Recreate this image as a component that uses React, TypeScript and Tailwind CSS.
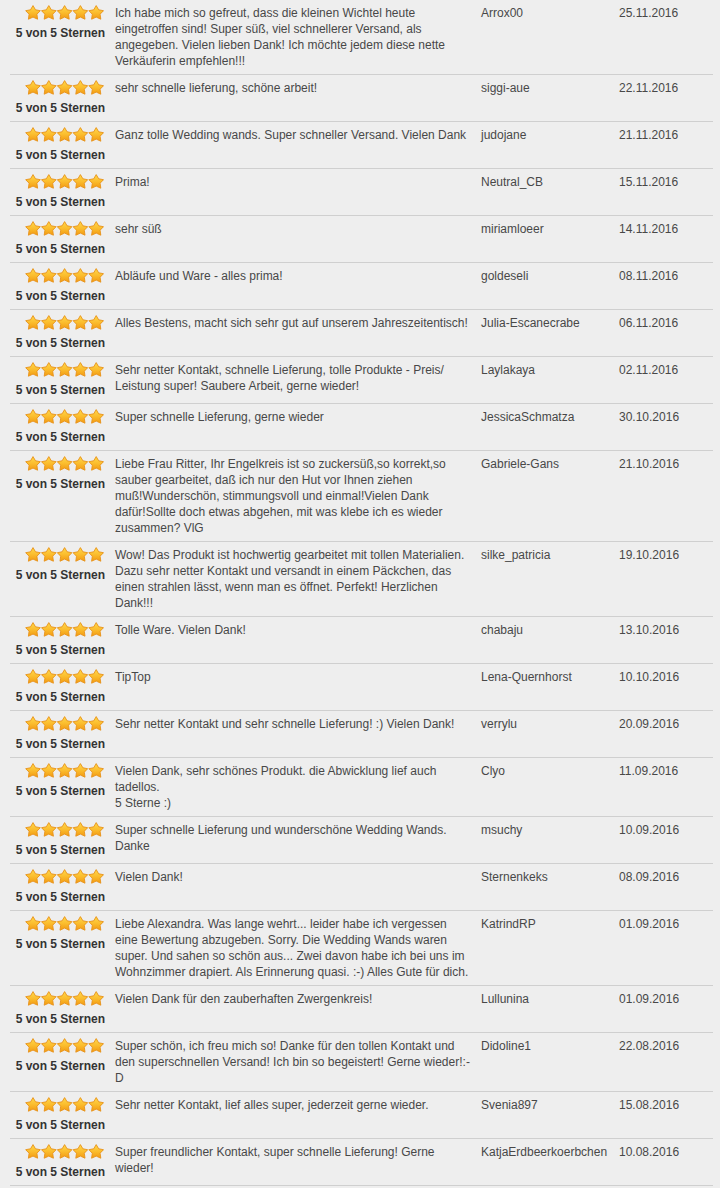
import React from "react";

type Row = { text: React.ReactNode; name: string; date: string };

const rows: Row[] = [
  { text: "Ich habe mich so gefreut, dass die kleinen Wichtel heute eingetroffen sind! Super süß, viel schnellerer Versand, als angegeben. Vielen lieben Dank! Ich möchte jedem diese nette Verkäuferin empfehlen!!!", name: "Arrox00", date: "25.11.2016" },
  { text: "sehr schnelle lieferung, schöne arbeit!", name: "siggi-aue", date: "22.11.2016" },
  { text: "Ganz tolle Wedding wands. Super schneller Versand. Vielen Dank", name: "judojane", date: "21.11.2016" },
  { text: "Prima!", name: "Neutral_CB", date: "15.11.2016" },
  { text: "sehr süß", name: "miriamloeer", date: "14.11.2016" },
  { text: "Abläufe und Ware - alles prima!", name: "goldeseli", date: "08.11.2016" },
  { text: "Alles Bestens, macht sich sehr gut auf unserem Jahreszeitentisch!", name: "Julia-Escanecrabe", date: "06.11.2016" },
  { text: <>Sehr netter Kontakt, schnelle Lieferung, tolle Produkte - Preis/<wbr />Leistung super! Saubere Arbeit, gerne wieder!</>, name: "Laylakaya", date: "02.11.2016" },
  { text: "Super schnelle Lieferung, gerne wieder", name: "JessicaSchmatza", date: "30.10.2016" },
  { text: "Liebe Frau Ritter, Ihr Engelkreis ist so zuckersüß,so korrekt,so sauber gearbeitet, daß ich nur den Hut vor Ihnen ziehen muß!Wunderschön, stimmungsvoll und einmal!Vielen Dank dafür!Sollte doch etwas abgehen, mit was klebe ich es wieder zusammen? VlG", name: "Gabriele-Gans", date: "21.10.2016" },
  { text: "Wow! Das Produkt ist hochwertig gearbeitet mit tollen Materialien. Dazu sehr netter Kontakt und versandt in einem Päckchen, das einen strahlen lässt, wenn man es öffnet. Perfekt! Herzlichen Dank!!!", name: "silke_patricia", date: "19.10.2016" },
  { text: "Tolle Ware. Vielen Dank!", name: "chabaju", date: "13.10.2016" },
  { text: "TipTop", name: "Lena-Quernhorst", date: "10.10.2016" },
  { text: "Sehr netter Kontakt und sehr schnelle Lieferung! :) Vielen Dank!", name: "verrylu", date: "20.09.2016" },
  { text: <>Vielen Dank, sehr schönes Produkt. die Abwicklung lief auch tadellos.<br />5 Sterne :)</>, name: "Clyo", date: "11.09.2016" },
  { text: "Super schnelle Lieferung und wunderschöne Wedding Wands. Danke", name: "msuchy", date: "10.09.2016" },
  { text: "Vielen Dank!", name: "Sternenkeks", date: "08.09.2016" },
  { text: "Liebe Alexandra. Was lange wehrt... leider habe ich vergessen eine Bewertung abzugeben. Sorry. Die Wedding Wands waren super. Und sahen so schön aus... Zwei davon habe ich bei uns im Wohnzimmer drapiert. Als Erinnerung quasi. :-) Alles Gute für dich.", name: "KatrindRP", date: "01.09.2016" },
  { text: "Vielen Dank für den zauberhaften Zwergenkreis!", name: "Lullunina", date: "01.09.2016" },
  { text: "Super schön, ich freu mich so! Danke für den tollen Kontakt und den superschnellen Versand! Ich bin so begeistert! Gerne wieder!:-D", name: "Didoline1", date: "22.08.2016" },
  { text: "Sehr netter Kontakt, lief alles super, jederzeit gerne wieder.", name: "Svenia897", date: "15.08.2016" },
  { text: "Super freundlicher Kontakt, super schnelle Lieferung! Gerne wieder!", name: "KatjaErdbeerkoerbchen", date: "10.08.2016" },
];

const STAR = "M8 0.6 L10.5 4.8 L15.3 5.7 L11.9 9.2 L12.6 14.2 L8 12.1 L3.4 14.2 L4.1 9.2 L0.7 5.7 L5.5 4.8 Z";

function Stars() {
  return (
    <svg width="79" height="15" viewBox="0 0 79 15" className="block">
      <defs>
        <linearGradient id="sg" x1="0" y1="0" x2="0" y2="1">
          <stop offset="0" stopColor="#ffd84a" />
          <stop offset="0.5" stopColor="#fbbd2e" />
          <stop offset="1" stopColor="#f29a12" />
        </linearGradient>
      </defs>
      {[0, 1, 2, 3, 4].map((i) => (
        <path
          key={i}
          d={STAR}
          transform={`translate(${i * 15.8} 0)`}
          fill="url(#sg)"
          stroke="#e8921a"
          strokeWidth="0.9"
          strokeLinejoin="round"
        />
      ))}
    </svg>
  );
}

export default function App() {
  return (
    <div
      className="min-h-[1188px] w-[720px] bg-[#eeeeee] pl-[10px] text-[12px] leading-4 text-[#484848]"
      style={{ fontFamily: '"Liberation Sans", Arial, sans-serif' }}
    >
      <div className="w-[703px]">
        {rows.map((r, i) => (
          <div
            key={i}
            className="grid grid-cols-[100px_366px_138px_99px] border-b border-[#cfcfcf]"
          >
            <div className="flex flex-col items-end p-[5px]">
              <div className="h-5 pr-px">
                <Stars />
              </div>
              <div className="h-4 font-bold text-[#333333]">5 von 5 Sternen</div>
            </div>
            <div className="p-[5px]">{r.text}</div>
            <div className="p-[5px] whitespace-nowrap">{r.name}</div>
            <div className="p-[5px]">{r.date}</div>
          </div>
        ))}
      </div>
    </div>
  );
}
